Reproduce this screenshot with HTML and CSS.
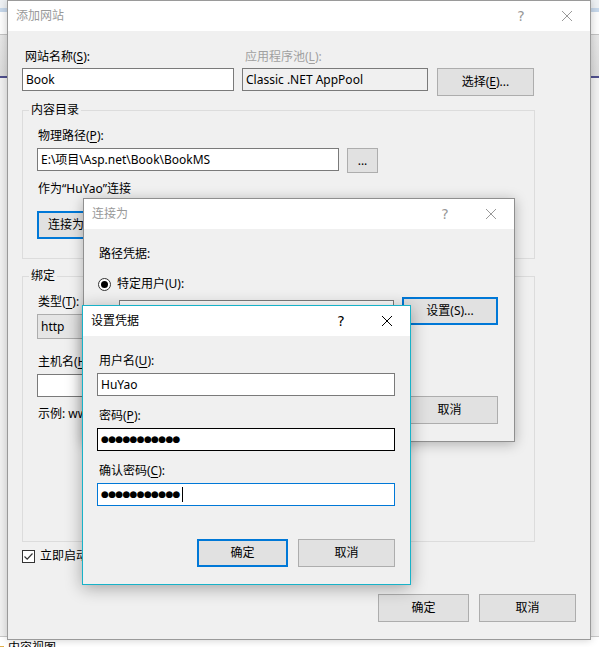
FILE: index.html
```html
<html>

<head>
  <meta charset="UTF-8">
  <meta name="viewport" content="width=device-width, initial-scale=1.0">
  <title>添加网站</title>
  <link rel="stylesheet" href="styles.css">
</head>

<body>
  <div class="desk">
    <div class="desk-cap"></div>
    <div class="desk-accent"></div>
    <div class="desk-menu"></div>
    <div class="desk-tools"></div>
    <div class="desk-pane"></div>
    <div class="desk-status"><span class="fold"></span>内容视图</div>
  </div>

  <!-- 添加网站 -->
  <section class="win win-main">
    <div class="titlebar">
      <span class="title">添加网站</span>
      <span class="tb-btn help">?</span>
      <span class="tb-btn close"><svg width="10" height="10" viewBox="0 0 10 10"><path d="M0 0L10 10M10 0L0 10" stroke="currentColor" stroke-width="1"/></svg></span>
    </div>
    <div class="win-body main-body">
      <div class="site-row">
        <div class="name-field">
          <span class="lbl">网站名称(<u>S</u>):</span>
          <div class="input">Book</div>
        </div>
        <div class="pool-field">
          <span class="lbl dim">应用程序池(<u>L</u>):</span>
          <div class="input readonly">Classic .NET AppPool</div>
        </div>
        <button class="btn pick">选择(<u>E</u>)...</button>
      </div>

      <fieldset class="group content-group">
        <legend>内容目录</legend>
        <span class="lbl sub">物理路径(<u>P</u>):</span>
        <div class="path-row">
          <div class="input path">E:\项目\Asp.net\Book\BookMS</div>
          <button class="btn browse">...</button>
        </div>
        <p class="note">作为“HuYao”连接</p>
        <button class="btn default connect">连接为(<u>C</u>)...</button>
      </fieldset>

      <fieldset class="group bind-group">
        <legend>绑定</legend>
        <span class="lbl sub">类型(<u>T</u>):</span>
        <div class="select">http</div>
        <span class="lbl sub host-lbl">主机名(<u>H</u>):</span>
        <div class="input host"></div>
        <p class="note sample">示例: www.contoso.com 或 marketing.contoso.com</p>
      </fieldset>

      <div class="check-row">
        <span class="checkbox"><svg width="11" height="11" viewBox="0 0 11 11"><path d="M1.5 5.5L4.2 8.2L9.5 2.5" fill="none" stroke="#333" stroke-width="1.2"/></svg></span>
        <span>立即启动网站(<u>M</u>)</span>
      </div>

      <div class="actions">
        <button class="btn ok">确定</button>
        <button class="btn cancel">取消</button>
      </div>
    </div>
  </section>

  <!-- 连接为 -->
  <section class="win win-connect">
    <div class="titlebar">
      <span class="title">连接为</span>
      <span class="tb-btn help">?</span>
      <span class="tb-btn close"><svg width="10" height="10" viewBox="0 0 10 10"><path d="M0 0L10 10M10 0L0 10" stroke="currentColor" stroke-width="1"/></svg></span>
    </div>
    <div class="win-body connect-body">
      <span class="lbl sub">路径凭据:</span>
      <div class="radio-row">
        <span class="radio on"></span>
        <span>特定用户(U):</span>
      </div>
      <div class="cred-row">
        <div class="input user"></div>
        <button class="btn default set">设置(S)...</button>
      </div>
      <div class="actions">
        <button class="btn ok">确定</button>
        <button class="btn cancel">取消</button>
      </div>
    </div>
  </section>

  <!-- 设置凭据 -->
  <section class="win win-cred">
    <div class="titlebar">
      <span class="title">设置凭据</span>
      <span class="tb-btn help">?</span>
      <span class="tb-btn close"><svg width="10" height="10" viewBox="0 0 10 10"><path d="M0 0L10 10M10 0L0 10" stroke="currentColor" stroke-width="1"/></svg></span>
    </div>
    <div class="win-body cred-body">
      <span class="lbl cl">用户名(<u>U</u>):</span>
      <div class="input">HuYao</div>
      <span class="lbl cl gap">密码(<u>P</u>):</span>
      <div class="input pass"><span class="dots">●●●●●●●●●●●</span></div>
      <span class="lbl cl gap">确认密码(<u>C</u>):</span>
      <div class="input pass focus"><span class="dots">●●●●●●●●●●●</span><span class="caret"></span></div>
      <div class="actions">
        <button class="btn default ok">确定</button>
        <button class="btn cancel">取消</button>
      </div>
    </div>
  </section>
</body>

</html>
```

FILE: styles.css
```css
* {
  box-sizing: border-box;
}

body {
  margin: 0;
  width: 599px;
  height: 647px;
  overflow: hidden;
  position: relative;
  font: 12px/16px "Noto Sans", "Noto Sans CJK SC", sans-serif;
  color: #000;
  background: #f0f0f0;
}

u {
  text-decoration-thickness: 1px;
  text-underline-offset: 2px;
}

/* background app */
.desk {
  height: 647px;
  display: flex;
  flex-direction: column;
}
.desk-cap {
  height: 8px;
  background: #eef1f4;
}
.desk-accent {
  height: 4px;
  background: #c6d7ea;
}
.desk-menu {
  height: 23px;
  background: #fcfcfc;
  border-bottom: 1px solid #c2c2c2;
}
.desk-tools {
  height: 43px;
  background: linear-gradient(#e6e6e6, #dadada);
  border-bottom: 2px solid #4f4f8c;
}
.desk-pane {
  flex: 1;
  background: #f0f0f0;
  border-bottom: 1px solid #c8c8c8;
}
.desk-status {
  height: 10px;
  background: #fff;
  padding: 3px 0 0 8px;
  overflow: hidden;
  position: relative;
}
.fold {
  display: inline-block;
  width: 4px;
  height: 6px;
  background: #e2b04a;
  margin-left: -8px;
  margin-right: 4px;
}

/* windows */
.win {
  position: absolute;
  background: #f0f0f0;
  border: 1px solid #9a9a9a;
  display: flex;
  flex-direction: column;
  box-shadow: 0 2px 12px rgba(0, 0, 0, 0.28);
}
.win-main {
  left: 7px;
  top: 0;
  width: 584px;
  height: 640px;
  box-shadow: 0 0 8px rgba(0, 0, 0, 0.2);
}
.win-connect {
  left: 83px;
  top: 198px;
  width: 432px;
  height: 244px;
  border-color: #8f8f8f;
}
.win-cred {
  left: 82px;
  top: 305px;
  width: 329px;
  height: 280px;
  border-color: #18b2c8;
  box-shadow: 0 3px 16px rgba(0, 0, 0, 0.32);
}

.titlebar {
  height: 30px;
  background: #fff;
  display: flex;
  align-items: center;
  padding-left: 8px;
  color: #999;
  flex-shrink: 0;
}
.win-cred .titlebar {
  color: #000;
}
.title {
  flex: 1;
}
.tb-btn {
  width: 46px;
  height: 30px;
  display: flex;
  align-items: center;
  justify-content: center;
}
.help {
  font: 14px/1 "DejaVu Sans", sans-serif;
}
.close svg {
  display: block;
}

.win-body {
  flex: 1;
  display: flex;
  flex-direction: column;
  align-items: flex-start;
}

/* controls */
.lbl {
  display: block;
  height: 16px;
  white-space: nowrap;
}
.dim {
  color: #a0a0a0;
}
.input {
  height: 23px;
  width: 100%;
  border: 1px solid #7a7a7a;
  background: #fff;
  padding: 0 3px;
  line-height: 21px;
  white-space: nowrap;
  overflow: hidden;
  margin-top: 3px;
}
.input.readonly {
  background: #f0f0f0;
}
.btn {
  height: 28px;
  background: #e1e1e1;
  border: 1px solid #adadad;
  font: inherit;
  color: #000;
  padding: 0;
  flex-shrink: 0;
}
.btn.default {
  border: 2px solid #0078d7;
}
.actions {
  margin-top: auto;
  align-self: stretch;
  display: flex;
  justify-content: flex-end;
  gap: 10px;
}
.actions .ok {
  width: 91px;
}
.actions .cancel {
  width: 97px;
}

/* 添加网站 */
.main-body {
  padding: 18px 14px 17px;
}
.site-row {
  display: flex;
  align-items: flex-start;
}
.site-row .lbl {
  padding-left: 3px;
}
.name-field {
  width: 212px;
  margin-right: 8px;
}
.pool-field {
  width: 186px;
  margin-right: 9px;
}
.btn.pick {
  width: 97px;
  margin-top: 19px;
}

.group {
  margin: 6px 0 0;
  padding: 10px 14px 19px;
  border: 1px solid #dcdcdc;
  width: 513px;
  min-width: 0;
}
.group legend {
  padding: 0 2px;
  margin-left: -8px;
  line-height: 16px;
}
.lbl.sub {
  padding-left: 1px;
}
.path-row {
  display: flex;
  align-items: flex-start;
  margin-top: 4px;
}
.input.path {
  width: 302px;
  margin: 0;
}
.btn.browse {
  width: 31px;
  height: 25px;
  margin-left: 8px;
}
.note {
  margin: 8px 0 0;
  padding-left: 1px;
  white-space: nowrap;
}
.btn.connect {
  margin-top: 14px;
  width: 92px;
  text-align: left;
  padding-left: 9px;
}

.bind-group {
  margin-top: 9px;
  padding-bottom: 119px;
}
.select {
  width: 100px;
  height: 25px;
  margin-top: 4px;
  background: #e5e5e5;
  border: 1px solid #adadad;
  padding-left: 3px;
  line-height: 23px;
}
.host-lbl {
  margin-top: 15px;
}
.input.host {
  width: 466px;
  margin-top: 4px;
}
.sample {
  margin-top: 9px;
}

.check-row {
  margin-top: 6px;
  display: flex;
  align-items: center;
  gap: 5px;
  white-space: nowrap;
}
.checkbox {
  width: 13px;
  height: 13px;
  border: 1px solid #333;
  background: #fff;
  display: flex;
  align-items: center;
  justify-content: center;
}

/* 连接为 */
.connect-body {
  padding: 17px 16px 17px 14px;
}
.radio-row {
  margin-top: 14px;
  display: flex;
  align-items: center;
  gap: 6px;
  white-space: nowrap;
}
.radio {
  width: 13px;
  height: 13px;
  border: 1px solid #333;
  border-radius: 50%;
  background: #fff;
  display: flex;
  align-items: center;
  justify-content: center;
}
.radio.on::after {
  content: "";
  width: 7px;
  height: 7px;
  border-radius: 50%;
  background: #000;
}
.cred-row {
  display: flex;
  align-items: flex-start;
  margin-top: 5px;
}
.input.user {
  width: 275px;
  margin-left: 21px;
}
.btn.set {
  width: 96px;
  margin-left: 8px;
}

/* 设置凭据 */
.cred-body {
  padding: 17px 15px 17px 14px;
}
.lbl.cl {
  padding-left: 2px;
}
.cred-body .input {
  margin-top: 4px;
}
.lbl.gap {
  margin-top: 12px;
}
.input.pass {
  border-color: #000;
  display: flex;
  align-items: center;
}
.input.focus {
  border-color: #0078d7;
}
.dots {
  font: 9px/1 "DejaVu Sans", sans-serif;
  letter-spacing: -0.7px;
}
.caret {
  width: 1px;
  height: 15px;
  background: #000;
  margin-left: 2px;
}
```
